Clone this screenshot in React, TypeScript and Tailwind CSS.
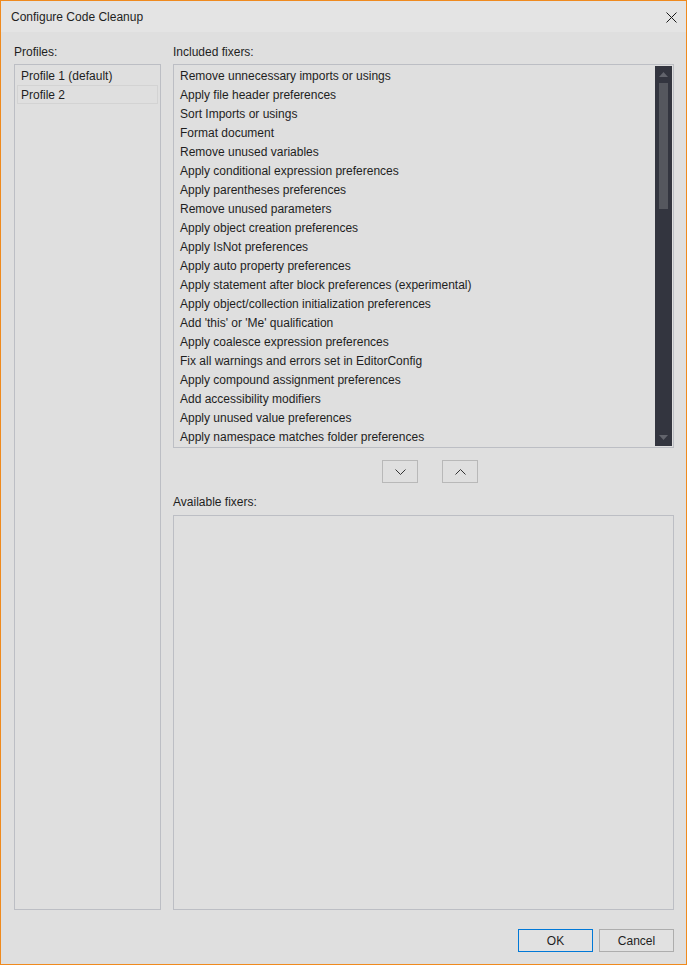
import React from "react";

const included = [
  "Remove unnecessary imports or usings",
  "Apply file header preferences",
  "Sort Imports or usings",
  "Format document",
  "Remove unused variables",
  "Apply conditional expression preferences",
  "Apply parentheses preferences",
  "Remove unused parameters",
  "Apply object creation preferences",
  "Apply IsNot preferences",
  "Apply auto property preferences",
  "Apply statement after block preferences (experimental)",
  "Apply object/collection initialization preferences",
  "Add 'this' or 'Me' qualification",
  "Apply coalesce expression preferences",
  "Fix all warnings and errors set in EditorConfig",
  "Apply compound assignment preferences",
  "Add accessibility modifiers",
  "Apply unused value preferences",
  "Apply namespace matches folder preferences",
];

export default function App() {
  return (
    <div
      className="w-[687px] h-[965px] border border-[#ef8a1e] bg-[#dfdfdf] flex flex-col text-[12px] text-[#1e1e1e] overflow-hidden"
      style={{ fontFamily: '"Liberation Sans", Arial, sans-serif' }}
    >
      {/* Title bar */}
      <div className="h-[31px] shrink-0 bg-[#e4e4e4] flex items-center justify-between pl-[10px] pr-[9px]">
        <span className="text-[12px] leading-[16px] text-[#1e1e1e]">Configure Code Cleanup</span>
        <svg width="11" height="11" viewBox="0 0 11 11" className="mt-[1px]">
          <path d="M0.5 0.5 L10.5 10.5 M10.5 0.5 L0.5 10.5" stroke="#1a1a1a" strokeWidth="1" />
        </svg>
      </div>

      {/* Body */}
      <div className="flex-1 flex flex-col pl-[13px] pr-[12px] pt-[12px] pb-[12px]">
        <div className="flex-1 flex gap-[12px] min-h-0">
          {/* Profiles column */}
          <div className="w-[147px] flex flex-col">
            <div className="h-[16px] leading-[16px] mb-[4px]">Profiles:</div>
            <div className="flex-1 border border-[#bcbec4] p-[1px]">
              <div className="h-[19px] mx-[1px] border border-transparent pl-[3px] flex items-center">
                Profile 1 (default)
              </div>
              <div className="h-[19px] mx-[1px] border border-[#d3d3d3] pl-[3px] flex items-center">
                Profile 2
              </div>
            </div>
          </div>

          {/* Fixers column */}
          <div className="flex-1 flex flex-col">
            <div className="h-[16px] leading-[16px] mb-[4px]">Included fixers:</div>
            <div className="relative h-[384px] border border-[#bcbec4] pt-[1px] pl-[6px] overflow-hidden">
              {included.map((t) => (
                <div key={t} className="h-[19px] flex items-center whitespace-nowrap">
                  {t}
                </div>
              ))}
              {/* Scrollbar */}
              <div className="absolute top-[1px] right-[1px] bottom-[1px] w-[17px] bg-[#33353f] flex flex-col items-center">
                <svg width="9" height="5" viewBox="0 0 9 5" className="mt-[6px]">
                  <path d="M0 5 L4.5 0 L9 5 Z" fill="#62646c" />
                </svg>
                <div className="mt-[6px] w-[9px] h-[126px] bg-[#55575e]" />
                <div className="flex-1" />
                <svg width="9" height="5" viewBox="0 0 9 5" className="mb-[6px]">
                  <path d="M0 0 L4.5 5 L9 0 Z" fill="#62646c" />
                </svg>
              </div>
            </div>

            <div className="flex mt-[12px] pl-[209px] gap-[24px]">
              <div className="w-[36px] h-[23px] border border-[#b8b8b8] flex items-center justify-center">
                <svg width="11" height="6" viewBox="0 0 11 6">
                  <path d="M0.5 0.5 L5.5 5.5 L10.5 0.5" stroke="#333" strokeWidth="1" fill="none" />
                </svg>
              </div>
              <div className="w-[36px] h-[23px] border border-[#b8b8b8] flex items-center justify-center">
                <svg width="11" height="6" viewBox="0 0 11 6">
                  <path d="M0.5 5.5 L5.5 0.5 L10.5 5.5" stroke="#333" strokeWidth="1" fill="none" />
                </svg>
              </div>
            </div>

            <div className="h-[16px] leading-[16px] mt-[11px] mb-[5px]">Available fixers:</div>
            <div className="flex-1 border border-[#bcbec4]" />
          </div>
        </div>

        {/* Footer */}
        <div className="flex justify-end gap-[6px] mt-[19px]">
          <button className="w-[75px] h-[23px] border border-[#0078d7] bg-[#e1e1e1] text-[12px] text-[#1e1e1e] flex items-center justify-center">
            OK
          </button>
          <button className="w-[75px] h-[23px] border border-[#adadad] bg-[#e1e1e1] text-[12px] text-[#1e1e1e] flex items-center justify-center">
            Cancel
          </button>
        </div>
      </div>
    </div>
  );
}
